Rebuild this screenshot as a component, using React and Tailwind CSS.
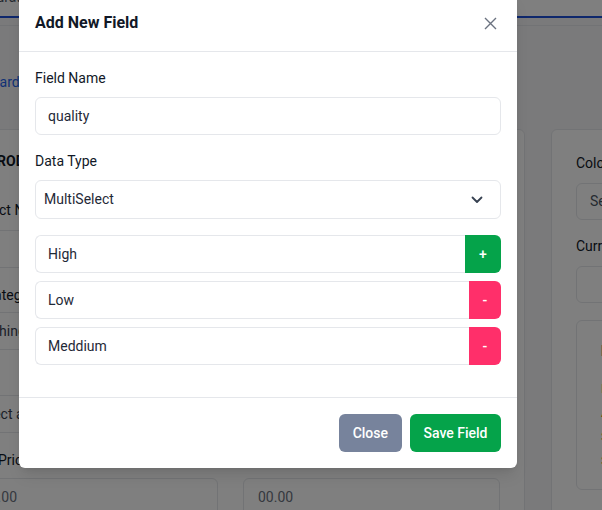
import React, { useState } from 'react';

const OptionRow = ({ value, kind }) => (
  <div className="flex h-[38px] w-full">
    <input
      readOnly
      value={value}
      className="min-w-0 flex-1 rounded-l-md border border-r-0 border-[#e5e7eb] bg-white px-3 text-[14px] text-[#1f2937] outline-none"
    />
    {kind === 'add' ? (
      <button className="w-[36px] rounded-r-md bg-[#05a34a] text-[14px] font-medium text-white">+</button>
    ) : (
      <button className="w-[32px] rounded-r-md bg-[#ff2f6a] text-[14px] font-medium text-white">-</button>
    )}
  </div>
);

const App = () => {
  const [fieldName, setFieldName] = useState('quality');
  const [options] = useState([
    { value: 'High', kind: 'add' },
    { value: 'Low', kind: 'remove' },
    { value: 'Meddium', kind: 'remove' },
  ]);

  return (
    <div className="relative h-[510px] w-full overflow-hidden bg-[#f5f5f6] font-['Roboto','Liberation_Sans',sans-serif]">
      {/* Page behind the modal */}
      <div className="flex h-[18px] items-end overflow-hidden border-b-2 border-[#1d4ed8] bg-white">
        <div className="mb-[11px] ml-[-44px] text-[14px] leading-[16px] text-[#4b5563]">Configuration</div>
      </div>
      <div className="h-[8px] border-b border-[#e5e7eb] bg-[#f5f5f6]" />

      <div className="ml-[-48px] mt-[46px] text-[14px] text-[#2563eb]">Dashboard</div>

      <div className="mt-[36px] flex gap-[26px]">
        {/* Left card */}
        <div className="ml-[-64px] h-[420px] w-[589px] shrink-0 rounded-md border border-[#e5e7eb] bg-white px-6 pt-[21px]">
          <div className="ml-[27px] text-[14px] font-bold text-[#111827]">PRODUCT DETAILS</div>
          <div className="mt-[28px] ml-[1px] text-[14px] text-[#111827]">Product Name</div>
          <div className="mt-[9px] h-[38px] rounded-md border border-[#e5e7eb]" />
          <div className="mt-[17px] ml-[24px] text-[14px] text-[#111827]">Category</div>
          <div className="mt-[6px] flex h-[38px] items-center rounded-md border border-[#e5e7eb] pl-[12px] text-[14px] text-[#374151]">
            Clothing
          </div>
          <div className="mt-[45px] flex h-[38px] items-center rounded-md border border-[#e5e7eb] pl-[12px] text-[14px] text-[#374151]">
            Select a category
          </div>
          <div className="mt-[17px] ml-[37px] text-[14px] text-[#111827]">Price</div>
          <div className="mt-[7px] grid grid-cols-2 gap-[25px]">
            <div className="flex h-[38px] items-center rounded-md border border-[#e5e7eb] pl-[12px] text-[14px] text-[#6b7280]">
              100.00
            </div>
            <div className="flex h-[38px] items-center rounded-md border border-[#e5e7eb] pl-[14px] text-[14px] text-[#6b7280]">
              00.00
            </div>
          </div>
        </div>

        {/* Right card */}
        <div className="h-[420px] w-[300px] shrink-0 rounded-md border border-[#e5e7eb] bg-white px-6 pt-[23px]">
          <div className="text-[14px] text-[#111827]">Color</div>
          <div className="mt-[9px] flex h-[37px] items-center rounded-md border border-[#e5e7eb] pl-[13px] text-[14px] text-[#4b5563]">
            Select color
          </div>
          <div className="mt-[16px] text-[14px] text-[#111827]">Currency</div>
          <div className="mt-[9px] h-[37px] rounded-md border border-[#e5e7eb]" />
          <div className="mt-[17px] h-[170px] rounded-md border border-[#e5e7eb] pl-[24px] pt-[20px]">
            <div className="text-[14px] font-bold text-[#111827]">Preview</div>
            <div className="mt-[15px] text-[13px] leading-[24px] text-[#ca8a04]">
              <div>Lorem ipsum</div>
              <div>Amber tone</div>
              <div>Sample text</div>
              <div>Sample text</div>
            </div>
          </div>
        </div>
      </div>

      {/* Overlay */}
      <div className="absolute inset-0 bg-black/50" />

      {/* Modal */}
      <div className="absolute left-[19px] top-[-6px] w-[498px] rounded-md bg-white shadow-lg">
        <div className="flex h-[58px] items-center justify-between border-b border-[#e5e7eb] px-4 pt-[1px]">
          <h3 className="text-[16px] font-bold text-[#111827]">Add New Field</h3>
          <button className="mr-[1px] flex h-5 w-5 items-center justify-center text-[#6b7280]">
            <svg width="13" height="13" viewBox="0 0 13 13" fill="none" stroke="currentColor" strokeWidth="1.4">
              <path d="M1 1 L12 12 M12 1 L1 12" />
            </svg>
          </button>
        </div>

        <div className="px-4 pb-8 pt-4">
          <label className="block text-[14px] leading-[21px] text-[#111827]">Field Name</label>
          <input
            value={fieldName}
            onChange={(e) => setFieldName(e.target.value)}
            className="mt-2 h-[38px] w-full rounded-md border border-[#e5e7eb] px-3 text-[14px] text-[#1f2937] outline-none"
          />

          <label className="mt-[16px] block text-[14px] leading-[21px] text-[#111827]">Data Type</label>
          <div className="mt-[8px] flex h-[39px] w-full items-center justify-between rounded-md border border-[#e5e7eb] pl-2 pr-[17px] text-[14px] text-[#1f2937]">
            <span>MultiSelect</span>
            <svg width="12" height="8" viewBox="0 0 12 8" fill="none" stroke="#374151" strokeWidth="1.8" strokeLinecap="round" strokeLinejoin="round">
              <path d="M1.5 1.5 L6 6 L10.5 1.5" />
            </svg>
          </div>

          <div className="mt-[16px] flex flex-col gap-[8px]">
            {options.map((opt, i) => (
              <OptionRow key={i} value={opt.value} kind={opt.kind} />
            ))}
          </div>
        </div>

        <div className="flex justify-end gap-2 border-t border-[#e5e7eb] p-4">
          <button className="h-[38px] rounded-md bg-[#77839c] px-[14px] text-[14px] font-medium text-white">Close</button>
          <button className="h-[38px] rounded-md bg-[#05a34a] px-[13.5px] text-[14px] font-medium text-white">Save Field</button>
        </div>
      </div>
    </div>
  );
};

export default App;
